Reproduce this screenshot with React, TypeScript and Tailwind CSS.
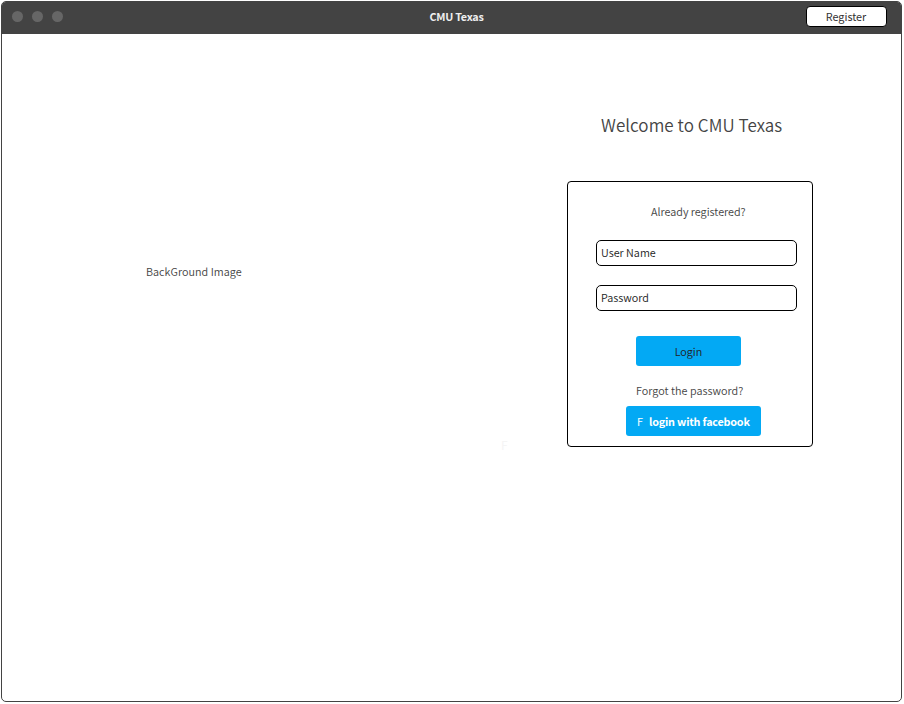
import React from "react";

function TitleBar() {
  return (
    <header className="flex h-8 shrink-0 bg-[#434343] text-[10.8px] leading-4">
      <div className="flex flex-1 gap-[9px] pl-[10px] pt-[9px]">
        <span className="size-[11px] rounded-full bg-[#666666]" />
        <span className="size-[11px] rounded-full bg-[#666666]" />
        <span className="size-[11px] rounded-full bg-[#666666]" />
      </div>
      <h1 className="ml-[14px] mt-1.5 whitespace-nowrap font-bold tracking-[-0.25px] text-[#eeeeee]">CMU Texas</h1>
      <div className="flex flex-1 justify-end pr-[14px] pt-1">
        <button className="flex h-[21px] w-[81px] items-center justify-center rounded border border-black bg-white pb-0.5 pr-px text-[#333333]">
          Register
        </button>
      </div>
    </header>
  );
}

function Field({ label }: { label: string }) {
  return (
    <input
      placeholder={label}
      className="block h-[26px] w-[201px] rounded-[5px] border border-black bg-white px-1 pb-0.5 placeholder:text-[#222222] placeholder:opacity-100"
    />
  );
}

function LoginCard() {
  return (
    <section className="h-[266px] w-[246px] rounded border border-black pl-7 pt-[21px]">
      <p className="ml-[55px] h-4 whitespace-nowrap">Already registered?</p>
      <div className="mt-[21px] flex flex-col gap-[19px]">
        <Field label="User Name" />
        <Field label="Password" />
      </div>
      <button className="ml-10 mt-[25px] flex h-[30px] w-[105px] items-center justify-center rounded-[3px] bg-[#03a9f4] text-[#222222]">
        Login
      </button>
      <p className="ml-10 mt-4 h-4 whitespace-nowrap tracking-[0.03px]">Forgot the password?</p>
      <button className="ml-[30px] mt-2 flex h-[30px] w-[135px] items-center rounded-[3px] bg-[#03a9f4] pl-[11px] text-white">
        <span className="w-[12px] text-left font-normal">F</span>
        <span className="whitespace-nowrap font-bold tracking-[-0.2px]">login with facebook</span>
      </button>
    </section>
  );
}

export default function App() {
  return (
    <div className="h-[704px] w-[904px] bg-white p-px font-['Noto_Sans_CJK_SC','Noto_Sans',sans-serif] text-[#444444]">
      <div className="flex h-[701px] w-[901px] flex-col overflow-hidden rounded-[5px] border border-[#434343] bg-white">
        <TitleBar />
        <main className="flex flex-1 text-[10.8px] font-[350] leading-4">
          <div className="w-[499px] pl-[144px] pt-[229px]">
            <p className="whitespace-nowrap tracking-[0.03px]">BackGround Image</p>
          </div>
          <span className="mt-[403px] w-[66px] text-[12px] font-normal text-[#f5f5f5]">F</span>
          <div className="pt-[77px]">
            <h2 className="mb-[42px] ml-[34px] h-7 whitespace-nowrap text-[17px] leading-7 tracking-[0.06px]">Welcome to CMU Texas</h2>
            <LoginCard />
          </div>
        </main>
      </div>
    </div>
  );
}
